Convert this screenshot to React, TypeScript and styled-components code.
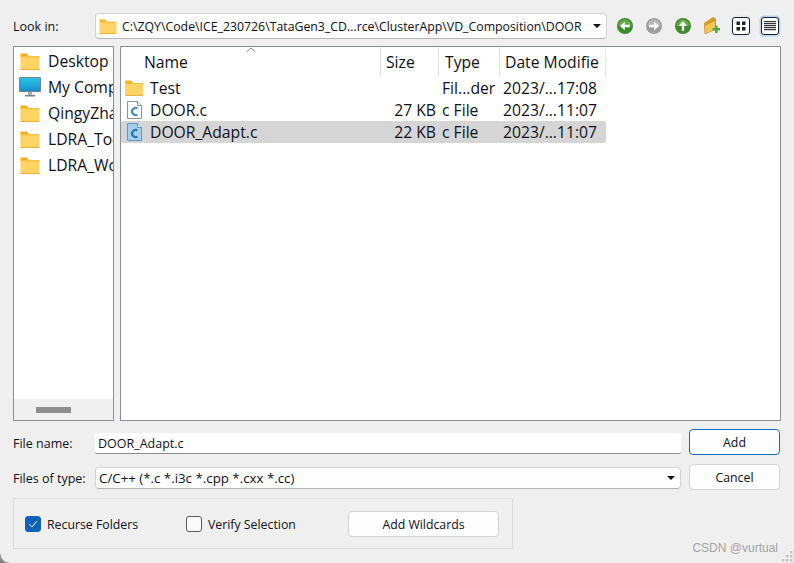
import React from 'react'
import styled, { createGlobalStyle } from 'styled-components'

const Global = createGlobalStyle`
  html, body { margin: 0; padding: 0; background: #efefef; }
  body { font-family: "Open Sans", "Noto Sans", "Liberation Sans", sans-serif; color: #101018; overflow: hidden; }
`

const Dialog = styled.div`
  position: relative;
  width: 794px;
  height: 563px;
  box-sizing: border-box;
  padding: 13px 13px 0 13px;
  background: #efefef;
  overflow: hidden;
`

const Corner = styled.div`
  position: absolute;
  left: 0;
  bottom: 0;
  width: 9px;
  height: 9px;
  background: radial-gradient(circle at 100% 0, transparent 7.500px, #9a9a9a 9px, #777 11px);
`

const TopRow = styled.div`
  display: flex;
  align-items: center;
  height: 26px;
`

const Label = styled.div<{ $drop: number }>`
  width: 82px;
  flex: none;
  font-size: 12.5px;
  line-height: 16px;
  padding-top: ${p => p.$drop}px;
`

const Combo = styled.div<{ $w: number; $h: number; $size: number; $mt?: number }>`
  width: ${p => p.$w}px;
  height: ${p => p.$h}px;
  margin-top: ${p => p.$mt ?? 0}px;
  flex: none;
  box-sizing: border-box;
  display: flex;
  align-items: center;
  background: #fdfdfd;
  border: 1px solid #d2d2d2;
  border-bottom-color: #b4b4b4;
  border-radius: 4px;
  font-size: ${p => p.$size}px;
  padding: 0 5px 0 3px;
`

const ComboText = styled.span`
  flex: 1;
  white-space: nowrap;
  overflow: hidden;
`

const PathText = styled(ComboText)`
  margin-left: 5px;
`

const Arrow = styled.span`
  flex: none;
  width: 0;
  height: 0;
  border-left: 4px solid transparent;
  border-right: 4px solid transparent;
  border-top: 4px solid #111;
`

const Tools = styled.div`
  display: flex;
  align-items: center;
  margin-left: 3px;
  margin-top: -1px;
`

const ToolSlot = styled.div`
  width: 29px;
  display: flex;
  justify-content: center;
`

const ViewBtn = styled.div<{ $on?: boolean }>`
  width: 18px;
  height: 18px;
  box-sizing: border-box;
  border: 1px solid #222;
  border-radius: 3px;
  background: #fff;
  display: flex;
  align-items: center;
  justify-content: center;
  box-shadow: 0 0 0 1.500px ${p => (p.$on ? '#b5d6f2' : '#dfe8f0')};
`

const Panels = styled.div`
  display: flex;
  gap: 6px;
  margin-top: 7px;
  height: 375px;
  width: 768px;
`

const Sidebar = styled.div`
  width: 101px;
  box-sizing: border-box;
  background: #fff;
  border: 1px solid #8a8f94;
  display: flex;
  flex-direction: column;
  overflow: hidden;
`

const SideList = styled.div`
  flex: 1;
  padding-top: 1px;
`

const SideItem = styled.div`
  height: 26px;
  display: flex;
  align-items: center;
  gap: 7px;
  padding-left: 5px;
  font-size: 15.700px;
  white-space: nowrap;
  overflow: hidden;
`

const HScroll = styled.div`
  height: 21px;
  background: #f0f0f0;
  display: flex;
  align-items: center;
  padding-left: 22px;
`

const HThumb = styled.div`
  width: 35px;
  height: 6px;
  background: #8e8e8e;
`

const Main = styled.div`
  flex: 1;
  position: relative;
  box-sizing: border-box;
  background: #fff;
  border: 1px solid #8a8f94;
`

const SortMark = styled.svg`
  position: absolute;
  left: 125px;
  top: 0;
`

const HeaderRow = styled.div`
  display: flex;
  height: 30px;
`

const HeadCell = styled.div<{ $w: number; $pad: number }>`
  width: ${p => p.$w}px;
  box-sizing: border-box;
  padding-left: ${p => p.$pad}px;
  border-right: 1px solid #e4e4e4;
  font-size: 15.700px;
  line-height: 30px;
  white-space: nowrap;
  overflow: hidden;
`

const FileRow = styled.div<{ $sel?: boolean }>`
  display: flex;
  align-items: center;
  height: 22px;
  width: 485px;
  border-radius: 2px;
  font-size: 15.700px;
  white-space: nowrap;
  background: ${p => (p.$sel ? '#d5d5d5' : 'transparent')};
`

const NameCell = styled.div`
  width: 260px;
  display: flex;
  align-items: center;
  gap: 7px;
  padding-left: 4px;
  box-sizing: border-box;
`

const SizeCell = styled.div`
  width: 55px;
  text-align: right;
`

const TypeCell = styled.div`
  width: 67px;
  padding-left: 6px;
  box-sizing: border-box;
`

const DateCell = styled.div`
  flex: 1;
`

const FormRow = styled.div<{ $mt: number }>`
  display: flex;
  align-items: center;
  margin-top: ${p => p.$mt}px;
  height: 26px;
`

const NameInput = styled.div`
  width: 586px;
  height: 21px;
  margin-top: 2px;
  flex: none;
  box-sizing: border-box;
  background: #fff;
  border-bottom: 1px solid #8a8a8a;
  border-radius: 2px;
  font-size: 12.500px;
  line-height: 21px;
  padding-left: 3px;
`

const Button = styled.div<{ $w: number; $primary?: boolean }>`
  width: ${p => p.$w}px;
  height: 26px;
  flex: none;
  box-sizing: border-box;
  background: #fdfdfd;
  border: 1px solid ${p => (p.$primary ? '#0f6cbd' : '#d4d4d4')};
  border-radius: 4px;
  font-size: 12.300px;
  line-height: 26px;
  text-align: center;
`

const SideButton = styled(Button)`
  margin-left: 8px;
`

const Group = styled.div`
  width: 500px;
  height: 51px;
  margin-top: 8px;
  box-sizing: border-box;
  border: 1px solid #dcdcdc;
  display: flex;
  align-items: center;
  padding-left: 11px;
`

const Check = styled.span<{ $on?: boolean }>`
  width: 16px;
  height: 16px;
  flex: none;
  box-sizing: border-box;
  border-radius: 3px;
  border: 1px solid ${p => (p.$on ? '#0f62b8' : '#5a5a5a')};
  background: ${p => (p.$on ? '#0f62b8' : '#fbfbfb')};
  display: flex;
  align-items: center;
  justify-content: center;
`

const CheckItem = styled.div<{ $w: number }>`
  width: ${p => p.$w}px;
  display: flex;
  align-items: center;
  gap: 6px;
  font-size: 12.300px;
  line-height: 18px;
  white-space: nowrap;
`

const CheckLabel = styled.span`
  padding-top: 2px;
`

const Watermark = styled.div`
  position: absolute;
  right: 16px;
  bottom: 8px;
  font-family: "Liberation Sans", sans-serif;
  font-size: 12px;
  color: #a3a3a3;
`

const Grip = styled.svg`
  position: absolute;
  right: 0;
  bottom: 0;
`

function Folder({ w = 18, h = 16 }: { w?: number; h?: number }) {
  return (
    <svg width={w} height={h} viewBox="0 0 18 16" style={{ flex: 'none' }}>
      <path d="M0 1.500a1 1 0 0 1 1-1h5l2 2.500H0z" fill="#f2b01e" />
      <rect x="0" y="3" width="18" height="13" rx="1" fill="#fdd465" />
      <rect x="0" y="3" width="18" height="1" fill="#f5b92c" />
      <rect x="0" y="15" width="18" height="1" fill="#eeb335" />
    </svg>
  )
}

function Monitor() {
  return (
    <svg width="22" height="20" viewBox="0 0 22 20" style={{ flex: 'none' }}>
      <defs>
        <linearGradient id="screen" x1="0" y1="0" x2="0" y2="1">
          <stop offset="0" stopColor="#2bc4e4" />
          <stop offset="1" stopColor="#1590cc" />
        </linearGradient>
      </defs>
      <rect x="0" y="0" width="22" height="15" rx="1" fill="#75828c" />
      <rect x="1" y="1" width="20" height="13" fill="url(#screen)" />
      <rect x="9" y="15" width="4" height="3" fill="#a4adb4" />
      <rect x="6" y="18" width="10" height="1.500" fill="#75828c" />
    </svg>
  )
}

function CFile({ sel }: { sel?: boolean }) {
  return (
    <svg width="15" height="18" viewBox="0 0 15 18" style={{ flex: 'none', marginLeft: 2, marginRight: 1 }}>
      <path d="M.5.5h10l4 4v13H.5z" fill={sel ? '#a9cfe8' : '#fff'} stroke={sel ? '#5a9ac4' : '#8a9299'} />
      <path d="M10.500.5v4h4" fill="#eee" stroke={sel ? '#5a9ac4' : '#8a9299'} />
      <path d="M10.500 7.400a3.600 3.600 0 1 0 0 6.200" fill="none" stroke={sel ? '#1f7ab5' : '#4a8fb5'} strokeWidth="2.200" />
    </svg>
  )
}

function NavIcon({ dir, grey }: { dir: 'left' | 'right' | 'up'; grey?: boolean }) {
  const rot = dir === 'left' ? 180 : dir === 'up' ? -90 : 0
  return (
    <svg width="16" height="16" viewBox="0 0 16 16">
      <circle cx="8" cy="8" r="8" fill={grey ? '#9e9e9e' : '#3f8a2c'} />
      <path d="M1.500 8a6.500 6.500 0 0 1 13 0z" fill={grey ? '#b8b8b8' : '#66ab4a'} />
      <path
        d="M3.200 6.800h5V3.800L13 8l-4.800 4.200V9.200h-5z"
        fill="#fff"
        transform={`rotate(${rot} 8 8)`}
      />
    </svg>
  )
}

function NewFolder() {
  return (
    <svg width="18" height="19" viewBox="0 0 18 19">
      <path d="M1 7l9-6 3 1.500V12L2 17z" fill="#d99a2b" />
      <path d="M1.500 9.500l10.500-5 1 8.500L2 18z" fill="#f6c757" stroke="#b98320" strokeWidth=".6" />
      <path d="M12 9.500h2.500V12H17v2.500h-2.500V17H12v-2.500H9.500V12H12z" fill="#55a83f" />
    </svg>
  )
}

function DotsIcon() {
  return (
    <svg width="10" height="10" viewBox="0 0 10 10">
      <rect x="0.500" y="0.500" width="3.500" height="3.500" fill="#222" />
      <rect x="6" y="0.500" width="3.500" height="3.500" fill="#222" />
      <rect x="0.500" y="6" width="3.500" height="3.500" fill="#222" />
      <rect x="6" y="6" width="3.500" height="3.500" fill="#222" />
    </svg>
  )
}

function LinesIcon() {
  return (
    <svg width="12" height="10" viewBox="0 0 12 10">
      {[0, 2, 4, 6, 8].map(y => (
        <rect key={y} x="0" y={y} width="12" height="1.200" fill="#333" />
      ))}
    </svg>
  )
}

const places = ['Desktop', 'My Computer', 'QingyZhang', 'LDRA_Toolsuite', 'LDRA_Workarea']

export default function App() {
  return (
    <Dialog>
      <Global />
      <TopRow>
        <Label $drop={2}>Look in:</Label>
        <Combo $w={512} $h={26} $size={12.300}>
          <Folder w={18} h={15} />
          <PathText>C:\ZQY\Code\ICE_230726\TataGen3_CD...rce\ClusterApp\VD_Composition\DOOR</PathText>
          <Arrow />
        </Combo>
        <Tools>
          <ToolSlot><NavIcon dir="left" /></ToolSlot>
          <ToolSlot><NavIcon dir="right" grey /></ToolSlot>
          <ToolSlot><NavIcon dir="up" /></ToolSlot>
          <ToolSlot><NewFolder /></ToolSlot>
          <ToolSlot><ViewBtn><DotsIcon /></ViewBtn></ToolSlot>
          <ToolSlot><ViewBtn $on><LinesIcon /></ViewBtn></ToolSlot>
        </Tools>
      </TopRow>

      <Panels>
        <Sidebar>
          <SideList>
            {places.map((p, i) => (
              <SideItem key={p}>
                {i === 1 ? <Monitor /> : <Folder w={22} h={17} />}
                <span>{p}</span>
              </SideItem>
            ))}
          </SideList>
          <HScroll><HThumb /></HScroll>
        </Sidebar>
        <Main>
          <SortMark width="10" height="6" viewBox="0 0 10 6">
            <path d="M.5 5L5 1l4.500 4" fill="none" stroke="#8a8a8a" />
          </SortMark>
          <HeaderRow>
            <HeadCell $w={260} $pad={23}>Name</HeadCell>
            <HeadCell $w={58} $pad={5}>Size</HeadCell>
            <HeadCell $w={61} $pad={6}>Type</HeadCell>
            <HeadCell $w={106} $pad={5}>Date Modifie</HeadCell>
          </HeaderRow>
          <FileRow>
            <NameCell><Folder /><span>Test</span></NameCell>
            <SizeCell />
            <TypeCell>Fil...der</TypeCell>
            <DateCell>2023/...17:08</DateCell>
          </FileRow>
          <FileRow>
            <NameCell><CFile /><span>DOOR.c</span></NameCell>
            <SizeCell>27 KB</SizeCell>
            <TypeCell>c File</TypeCell>
            <DateCell>2023/...11:07</DateCell>
          </FileRow>
          <FileRow $sel>
            <NameCell><CFile sel /><span>DOOR_Adapt.c</span></NameCell>
            <SizeCell>22 KB</SizeCell>
            <TypeCell>c File</TypeCell>
            <DateCell>2023/...11:07</DateCell>
          </FileRow>
        </Main>
      </Panels>

      <FormRow $mt={8}>
        <Label $drop={4}>File name:</Label>
        <NameInput>DOOR_Adapt.c</NameInput>
        <SideButton $w={91} $primary>Add</SideButton>
      </FormRow>
      <FormRow $mt={9}>
        <Label $drop={4}>Files of type:</Label>
        <Combo $w={586} $h={22} $size={13.300} $mt={2}>
          <ComboText>C/C++ (*.c *.i3c *.cpp *.cxx *.cc)</ComboText>
          <Arrow />
        </Combo>
        <SideButton $w={91}>Cancel</SideButton>
      </FormRow>

      <Group>
        <CheckItem $w={161}>
          <Check $on>
            <svg width="10" height="8" viewBox="0 0 10 8">
              <path d="M1 4l3 3 5-6" fill="none" stroke="#fff" strokeWidth="1" />
            </svg>
          </Check>
          <CheckLabel>Recurse Folders</CheckLabel>
        </CheckItem>
        <CheckItem $w={162}>
          <Check />
          <CheckLabel>Verify Selection</CheckLabel>
        </CheckItem>
        <Button $w={151}>Add Wildcards</Button>
      </Group>

      <Corner />
      <Watermark>CSDN @vurtual</Watermark>
      <Grip width="14" height="14" viewBox="0 0 14 14">
        {[[10, 2], [6, 6], [10, 6], [2, 10], [6, 10], [10, 10]].map(([x, y]) => (
          <rect key={`${x}-${y}`} x={x} y={y} width="2.500" height="2.500" fill="#c4c4c4" />
        ))}
      </Grip>
    </Dialog>
  )
}
